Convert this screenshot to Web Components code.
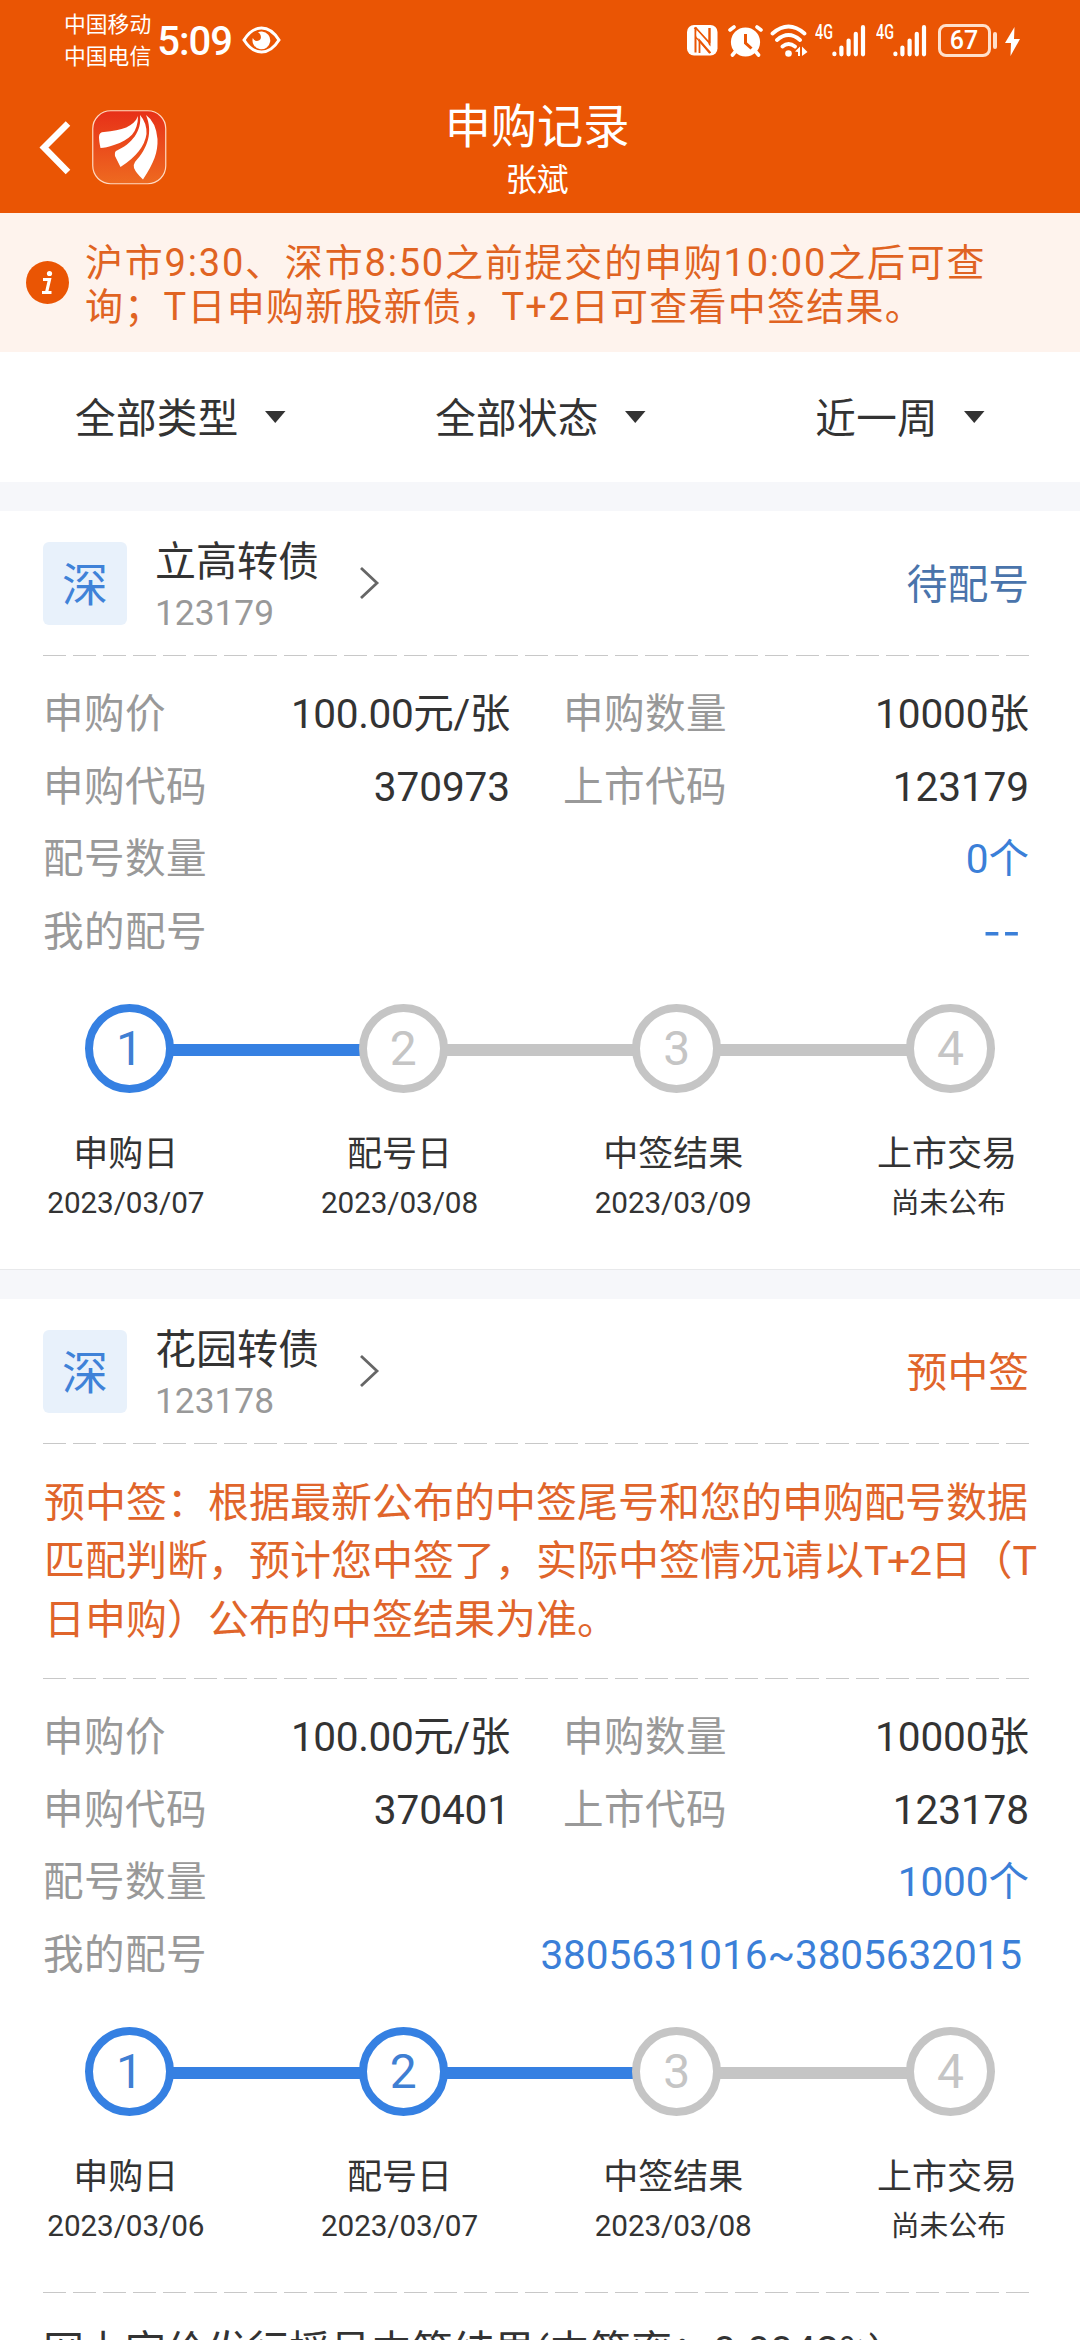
<!DOCTYPE html>
<html lang="zh-CN">
<head>
<meta charset="utf-8">
<title>申购记录</title>
<style>
html,body{margin:0;padding:0}
body{width:1080px;height:2340px;overflow:hidden;background:#fff;color:#333;font-family:Roboto,"Noto Sans CJK SC",sans-serif}
</style>
</head>
<body>
<record-page></record-page>
<script>
const define = (name, html) => {
  customElements.define(name, class extends HTMLElement {
    connectedCallback() {
      if (this.shadowRoot) return;
      const t = document.createElement('template');
      t.innerHTML = typeof html === 'function' ? html(this) : html;
      this.attachShadow({mode: 'open'}).append(t.content.cloneNode(true));
    }
  });
};

const bars = `<svg width="34" height="33" viewBox="0 0 34 33" fill="none" stroke="#fff" stroke-width="4.2" stroke-linecap="round"><path d="M2.4 29.6v.6M9.4 23.5v6.8M16.6 16.5v13.8M23.8 9.8v20.5M31 3.2v27.1"/></svg>`;

define('status-bar', `
<style>
:host{display:flex;height:80px;box-sizing:border-box;padding:9px 60px 0 64px;color:#fff;justify-content:space-between}
.left,.right{display:flex;align-items:flex-start}
.carrier{font-size:21.8px;line-height:32px;white-space:nowrap}
.time{font-size:40px;line-height:56px;margin:5px 0 0 6px;letter-spacing:-1px;font-weight:500;width:78px;white-space:nowrap}
.eye{margin:17px 0 0 7px}
.right{padding-top:15px}
.g{font-size:20px;line-height:17px;width:17px;white-space:nowrap;font-weight:500}
.g span{display:inline-block;transform:scaleX(.72);transform-origin:left}
.bat{box-sizing:border-box;width:53px;height:33px;border:3px solid #ffe0cc;border-radius:8px;text-align:center;font-weight:500;font-size:25px;line-height:28px}
.nub{width:4.5px;height:17px;background:#ffe0cc;border-radius:2px;margin:8px 0 0 2px}
svg{display:block}
</style>
<div class="left">
 <div class="carrier"><div>中国移动</div><div>中国电信</div></div>
 <div class="time">5:09</div>
 <svg class="eye" width="39" height="28" viewBox="0 0 39 28"><path d="M2 14C7 6 13 2 19.500 2S32 6 37 14C32 22 26 26 19.500 26S7 22 2 14Z" fill="none" stroke="#fff" stroke-width="3"/><path d="M20 5.500A8.900 8.900 0 1 1 10.800 12Q12.500 15.500 16 14.800Q20 13.500 18.500 9Q17.500 7 16 6.200Q18 5.300 20 5.500Z" fill="#fff"/></svg>
</div>
<div class="right">
 <svg style="margin-top:1px" width="31" height="31" viewBox="0 0 31 31"><rect width="30.500" height="30.500" rx="7" fill="#fff"/><path d="M8.500 2.500V27.500M7.500 2.500 22.500 19V3M8.500 11 23 28" fill="none" stroke="#ea5504" stroke-width="2"/><path d="M9.500 4 21.500 17V25.500L9.500 12Z" fill="#fff"/><path d="M12.500 28V15.500L23.500 28M8.500 2.500 22.500 18M22.500 3V18" fill="none" stroke="#ea5504" stroke-width="1.800"/></svg>
 <svg style="margin:0 0 0 10px" width="35" height="33" viewBox="0 0 35 33"><g fill="none" stroke="#fff" stroke-width="3.600" stroke-linecap="round"><path d="M2 6 6 3M33 6 29 3M7 28 4.500 31M28 28 30.500 31"/></g><circle cx="17.500" cy="18" r="14.600" fill="#fff"/><path d="M17.500 10v9l6 5.500" fill="none" stroke="#ea5504" stroke-width="3"/></svg>
 <svg style="margin-left:7px" width="39" height="33" viewBox="0 0 39 33"><g fill="none" stroke="#fff" stroke-width="3.800" stroke-linecap="round"><path d="M2.500 9.500Q18.500-4.500 34.500 9.500M7 16Q18.500 6 30 16M12.500 22.500Q18.500 17.500 25 22.500"/></g><circle cx="18.500" cy="29.500" r="3.300" fill="#fff"/><path d="M25 27.500 30 22.500V32H28V28ZM32 22.500 37.500 28 32 32Z" fill="#fff"/></svg>
 <div class="g" style="margin-left:6px"><span>4G</span></div>${bars}
 <div class="g" style="margin-left:10px"><span>4G</span></div>${bars}
 <div class="bat" style="margin-left:11px">67</div><div class="nub"></div>
 <svg style="margin:3px 0 0 8px" width="15" height="29" viewBox="0 0 15 29"><path d="M9.500 0 0 16H6L5.500 29 15 12H9Z" fill="#fff"/></svg>
</div>`);

define('app-header', `
<style>
:host{display:grid;grid-template-columns:437px 200px 1fr;height:133px}
.nav{display:flex;padding:30px 0 0 39px;gap:21px;align-items:flex-start}
.nav svg{display:block}
.mid{text-align:center;color:#fff;white-space:nowrap;display:flex;flex-direction:column;align-items:center}
.t{font-size:46.2px;line-height:64px;padding-top:15px}
.s{font-size:31.5px;line-height:44px}
</style>
<div class="nav">
 <svg style="margin-top:9px" width="32" height="58" viewBox="0 0 32 58"><path d="M29 4.500 5 28.500 29 53" fill="none" stroke="#fff" stroke-width="6.400" stroke-linecap="butt"/></svg>
 <svg width="75" height="75" viewBox="0 0 75 75"><defs><linearGradient id="a" x1="0" y1="0" x2="0" y2="1"><stop offset="0" stop-color="#e73018"/><stop offset="1" stop-color="#ee6a20"/></linearGradient></defs><rect x=".75" y=".75" width="73" height="73" rx="18" fill="url(#a)" stroke="#ffd9c2" stroke-width="1.200"/>
 <path d="M46 6C42 17 30 20 12 22Q7 22 7 27Q7 31 8.500 38Q14 38 22 35C38 30 46 22 46 6Z" fill="#fff"/><path d="M48 5C50 21 40 34 24 41Q22.500 42 23 46L28.500 57Q52 42 54.500 24Q55 13 48 5Z" fill="#fff"/><path d="M54 5C61 22 56 38 43 52Q41 55 42 58Q44 63 51 69.500C62 53 66 42 65.500 29Q64 12 54 5Z" fill="#fff"/></svg>
</div>
<div class="mid"><div class="t">申购记录</div><div class="s">张斌</div></div>`);

define('notice-bar', `
<style>
:host{display:flex;height:139px;background:#fef3ed;box-sizing:border-box;padding:28px 0 0 26px;color:#e06322;gap:16px}
svg{display:block;margin-top:20px;flex:none}
.x{font-size:38px;line-height:44px;letter-spacing:1.8px;white-space:nowrap}
::slotted(.b){letter-spacing:1.25px}
</style>
<svg width="43" height="43" viewBox="0 0 43 43"><circle cx="21.500" cy="21.500" r="21.500" fill="#ea5504"/><circle cx="23.500" cy="12.500" r="2.600" fill="#fff"/><path d="M17 18.500H23.500L20.500 31.500M16 31.500H25.500" fill="none" stroke="#fff" stroke-width="3.200"/></svg>
<div class="x"><slot></slot></div>`);

define('filter-item', `
<style>
:host{display:flex;align-items:center;gap:26px;font-size:40.6px;letter-spacing:.3px;line-height:60px;white-space:nowrap}
svg{display:block;margin-top:-3px}
</style><span><slot></slot></span><svg width="21" height="12"><path d="M0 0H20.500L10.250 12Z" fill="#333"/></svg>`);

define('filter-bar', `
<style>:host{display:flex;justify-content:space-between;height:130px;padding:3px 95px 0 75px;box-sizing:border-box}
::slotted(:nth-child(2)){margin-left:-20px}</style><slot></slot>`);

define('dash-line', `
<style>:host{display:block;height:1px;margin:0 51px 0 43px;background:repeating-linear-gradient(90deg,#c8c8c8 0 23px,transparent 23px 30.1px)}</style>`);

define('info-pair', e => `
<style>
:host{display:flex;justify-content:space-between;white-space:nowrap;font-size:40.6px;line-height:72.7px}
.k{color:#999;letter-spacing:.4px}.v{letter-spacing:-.1px;color:${e.hasAttribute('blue') ? '#3b7fd8' : '#333'}}
:host([inset]) .v{margin-right:7px}
.v.d{font-family:"Noto Sans CJK SC",sans-serif;font-size:50px;letter-spacing:2px;line-height:60px}
.v.p{letter-spacing:-.4px}
</style><span class="k">${e.getAttribute('k')}</span><span class="v ${e.getAttribute('v') === '--' ? 'd' : e.getAttribute('v').includes('/') ? 'p' : ''}">${e.getAttribute('v')}</span>`);

define('step-track', e => {
  const steps = e.getAttribute('steps').split('|').map(s => s.split(','));
  const on = +e.getAttribute('done');
  return `<style>
:host{display:block}
.track{display:flex;align-items:center;margin-left:85px;width:910px;height:89px}
.c{box-sizing:border-box;width:89px;height:89px;border-radius:50%;border:8.7px solid #c5c5c5;color:#c5c5c5;text-align:center;font-size:48px;line-height:73px;flex:none;font-weight:400}
.c.on{border-color:#3580e2;color:#3f7fd3}
.l{flex:1;height:12px;background:#c5c5c5;margin:3px -2px 0}
.l.on{background:#3580e2}
.names{display:grid;grid-template-columns:repeat(4,273.7px);margin-left:-11px;text-align:center;padding-top:37px}
.n{font-size:35px;line-height:50px}
.d{font-size:29.7px;line-height:46px;letter-spacing:-.1px}
.d.z{font-size:28.8px;letter-spacing:0;text-indent:3px}
</style>
<div class="track">${steps.map((s, i) => `<div class="c ${i < on ? 'on' : ''}">${i + 1}</div>${i < 3 ? `<div class="l ${i < on ? 'on' : ''}"></div>` : ''}`).join('')}</div>
<div class="names">${steps.map(s => `<div><div class="n">${s[0]}</div><div class="d ${/^\d/.test(s[1]) ? '' : 'z'}">${s[1]}</div></div>`).join('')}</div>`;
});

define('bond-card', e => {
  const a = n => e.getAttribute(n);
  return `<style>
:host{display:block;background:#fff}
.head{display:flex;height:144px;padding:0 51px 0 43px;align-items:flex-start}
.badge{width:84px;height:83px;margin-top:31px;border-radius:6px;background:#e8f1fb;color:#3f82d8;font-size:46px;line-height:86px;text-align:center}
.id{margin:25px 0 0 28px;white-space:nowrap}
.name{font-size:41px;line-height:52px}
.code{font-size:35.3px;line-height:48px;color:#999;padding-top:1px}
.arr{margin:55px auto 0 40px}
.st{font-size:40.8px;line-height:60px;margin-top:44px;color:${a('tone')}}
.rows{display:grid;grid-template-columns:467px 466px;justify-content:space-between;padding:22px 51px 0 43px}
.rows>.w{grid-column:1/3}
.rows>*{height:72.7px}
.tip{height:204px;padding-top:30px;padding-left:44px;font-size:41px;line-height:58.3px;color:#e0652b;white-space:nowrap}
::slotted(.t){letter-spacing:-1.4px}
step-track{margin-top:35.2px}
.foot{height:43px}
</style>
<div class="head"><div class="badge">深</div>
<div class="id"><div class="name">${a('name')}</div><div class="code">${a('code')}</div></div>
<svg class="arr" width="22" height="34" viewBox="0 0 22 34"><path d="M2 2 18 17 2 32" fill="none" stroke="#666" stroke-width="2.800"/></svg>
<div class="st">${a('status')}</div></div>
<dash-line></dash-line>
${e.hasAttribute('tip') ? `<div class="tip"><slot></slot></div><dash-line></dash-line>` : ''}
<div class="rows">
<info-pair k="申购价" v="100.00元/张"></info-pair><info-pair k="申购数量" v="10000张"></info-pair>
<info-pair k="申购代码" v="${a('apply')}"></info-pair><info-pair k="上市代码" v="${a('code')}"></info-pair>
<info-pair class="w" blue k="配号数量" v="${a('count')}"></info-pair>
<info-pair class="w" blue inset k="我的配号" v="${a('mine')}"></info-pair>
</div>
<step-track done="${a('done')}" steps="${a('steps')}"></step-track>
<div class="foot"></div>`;
});

define('record-page', `
<style>
:host{display:block;width:1080px;height:2340px;overflow:hidden}
.top{background:#ea5504}
.gap{height:29px;background:#f6f7fa}
.gap.b{box-sizing:border-box;height:30px;border-top:1px solid #e8e9eb}
.draw{font-size:41px;line-height:60px;padding:28px 0 0 43px;white-space:nowrap}
</style>
<div class="top"><status-bar></status-bar><app-header></app-header></div>
<notice-bar>沪市9:30、深市8:50之前提交的申购10:00之后可查<br><span class="b">询；T日申购新股新债，T+2日可查看中签结果。</span></notice-bar>
<filter-bar><filter-item>全部类型</filter-item><filter-item>全部状态</filter-item><filter-item>近一周</filter-item></filter-bar>
<div class="gap"></div>
<bond-card name="立高转债" code="123179" status="待配号" tone="#4a74ab" apply="370973" count="0个" mine="--" done="1" steps="申购日,2023/03/07|配号日,2023/03/08|中签结果,2023/03/09|上市交易,尚未公布"></bond-card>
<div class="gap b"></div>
<bond-card tip name="花园转债" code="123178" status="预中签" tone="#e0652b" apply="370401" count="1000个" mine="3805631016~3805632015" done="2" steps="申购日,2023/03/06|配号日,2023/03/07|中签结果,2023/03/08|上市交易,尚未公布">预中签：根据最新公布的中签尾号和您的申购配号数据<br>匹配判断，预计您中签了，实际中签情况请以<span class="t">T+2</span>日（T<br>日申购）公布的中签结果为准。</bond-card>
<dash-line></dash-line>
<div class="draw">网上定价发行摇号中签结果(中签率：0.0042%)</div>`);
</script>
</body>
</html>
